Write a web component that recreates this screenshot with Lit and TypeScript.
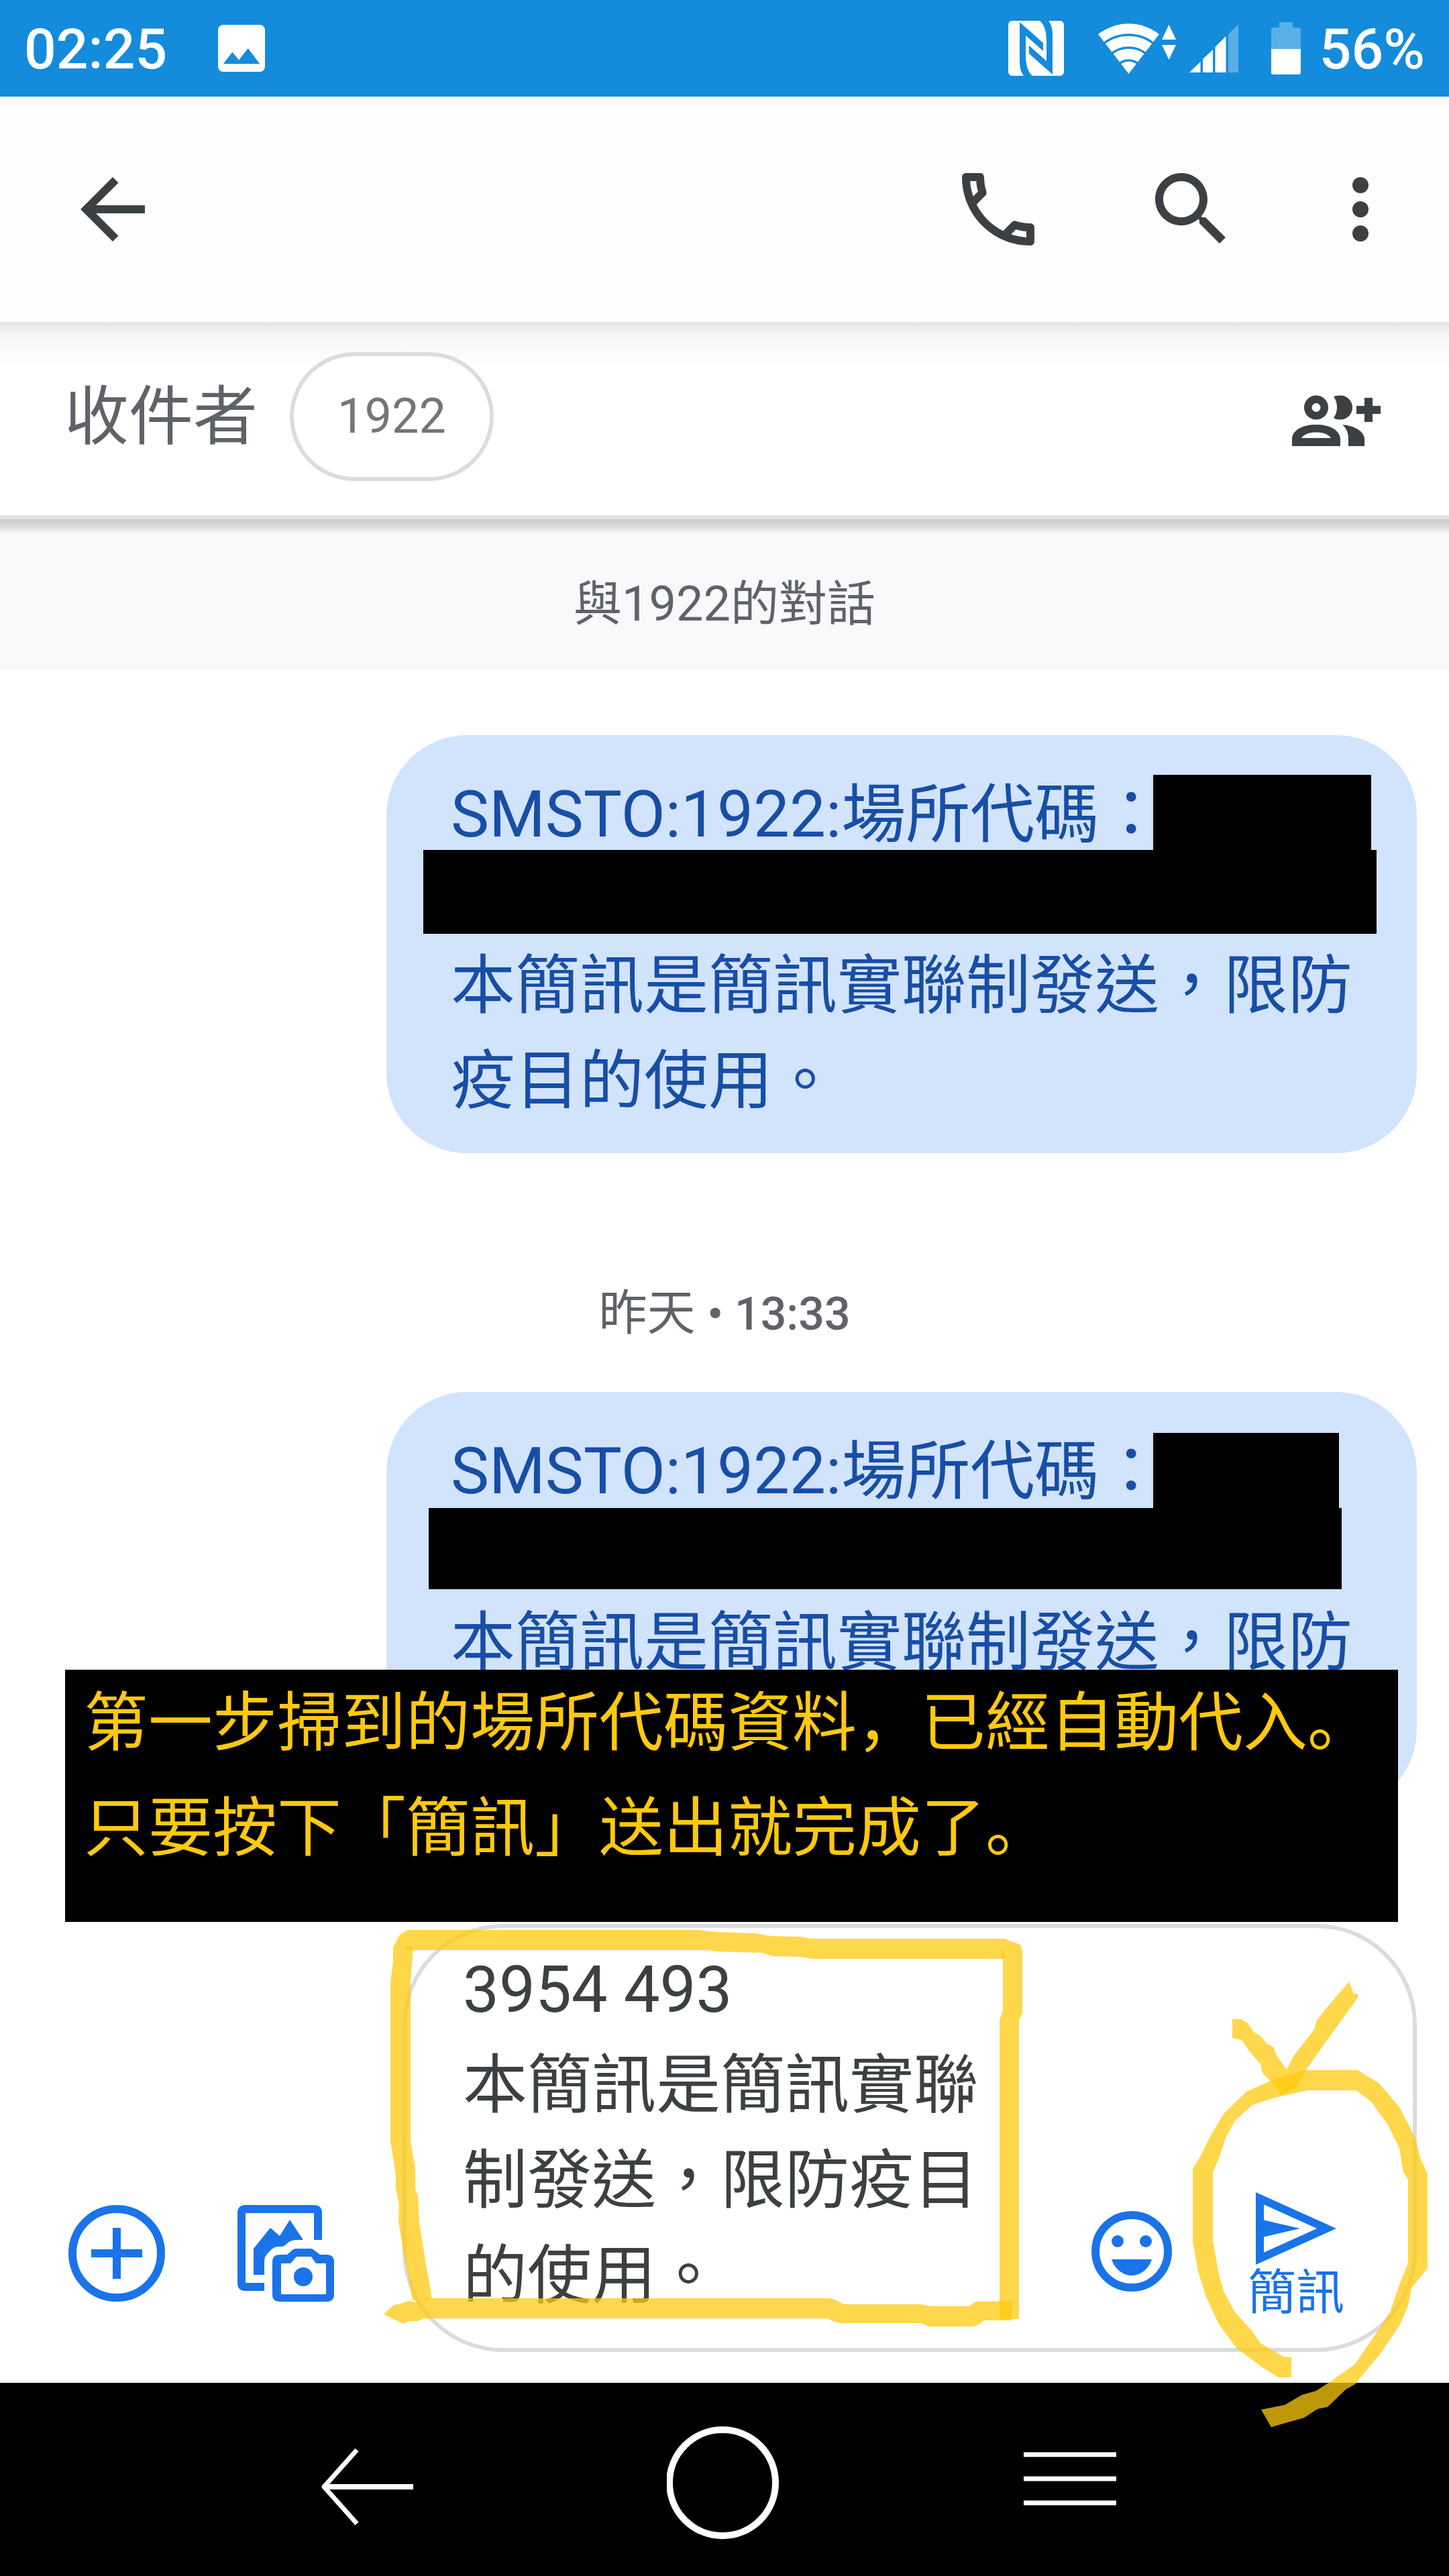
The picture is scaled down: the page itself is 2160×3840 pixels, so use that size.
import { LitElement, html, css, svg } from "lit";
import { customElement, property } from "lit/decorators.js";

const reset = css`
  *,
  *::before,
  *::after {
    box-sizing: border-box;
  }
  button {
    display: block;
    margin: 0;
    padding: 0;
    border: 0;
    background: none;
    color: inherit;
    font: inherit;
    cursor: pointer;
  }
  svg {
    display: block;
    flex: none;
  }
  .icon {
    width: 144px;
    height: 144px;
    fill: currentColor;
  }
`;

@customElement("status-bar")
export class StatusBar extends LitElement {
  static styles = [
    reset,
    css`
      :host {
        display: flex;
        align-items: center;
        height: 144px;
        padding: 0 36px;
        background: #148cdb;
        color: #fff;
        font-size: 84px;
        font-weight: 500;
        line-height: 144px;
      }
      .text {
        padding-top: 4px;
      }
      .time {
        margin-right: 76px;
      }
      .tray {
        display: flex;
        align-items: center;
        margin-left: auto;
      }
      .nfc {
        margin-right: 51px;
      }
      .wifi {
        margin-right: 20px;
      }
      .signal {
        margin-right: 49px;
      }
      .battery {
        margin-right: 28px;
      }
    `,
  ];

  render() {
    return html`
      <span class="text time">02:25</span>
      <svg width="70" height="70" viewBox="3 3 18 18" fill="#fff">
        <path d="M21 19V5c0-1.1-.9-2-2-2H5c-1.100 0-2 .9-2 2v14c0 1.100.9 2 2 2h14c1.100 0 2-.9 2-2zM8.500 13.500l2.500 3.010L14.500 12l4.500 6H5l3.500-4.500z" />
      </svg>
      <div class="tray">
        <svg class="nfc" width="83" height="82" viewBox="0 0 83 82">
          <rect width="83" height="82" rx="6" fill="#fff" />
          <g fill="#148cdb">
            <path d="M17 2 52 33V45L26 22V50C26 66 29 76 36 82H23C19 77 17 70 17 60Z" />
            <path transform="rotate(180 41.500 41)" d="M17 2 52 33V45L26 22V50C26 66 29 76 36 82H23C19 77 17 70 17 60Z" />
          </g>
        </svg>
        <svg class="wifi" width="116" height="76" viewBox="0 0 116 76">
          <path fill="#fff" d="M45.500 76 0 17A74 74 0 0 1 91 17Z" />
          <g fill="none" stroke="#148cdb" stroke-width="3.500">
            <circle cx="45.500" cy="78" r="60" />
            <circle cx="45.500" cy="78" r="41" />
            <circle cx="45.500" cy="78" r="22" />
          </g>
          <path fill="#fff" d="M95 25 105.500 3 116 25ZM95 33 105.500 55 116 33Z" />
        </svg>
        <svg class="signal" width="73" height="72" viewBox="0 0 73 72" fill="#fff">
          <path d="M0 72 16.500 56V72ZM20 72V52L35 38V72ZM38.500 72V34L54.500 18V72Z" />
          <path opacity=".3" d="M58 72V15L73 0V72Z" />
        </svg>
        <svg class="battery" width="44" height="78" viewBox="0 0 44 78" fill="#fff">
          <path opacity=".3" d="M0 40V12Q0 8 4 8H12V0H32V8H40Q44 8 44 12V40Z" />
          <path d="M0 40H44V75Q44 78 41 78H3Q0 78 0 75Z" />
        </svg>
        <span class="text">56%</span>
      </div>
    `;
  }
}

@customElement("top-bar")
export class TopBar extends LitElement {
  static styles = [
    reset,
    css`
      :host {
        display: flex;
        align-items: center;
        height: 336px;
        padding: 0 60px 0 96px;
        background: #fdfdfd;
        color: #3c4043;
      }
      .actions {
        display: flex;
        margin-left: auto;
      }
      .search {
        margin: 0 108px 0 144px;
      }
    `,
  ];

  render() {
    return html`
      <button aria-label="返回">
        <svg class="icon" viewBox="0 0 24 24">
          <path d="M20 11H7.830l5.590-5.590L12 4l-8 8 8 8 1.410-1.410L7.830 13H20v-2z" />
        </svg>
      </button>
      <div class="actions">
        <button aria-label="通話">
          <svg class="icon" viewBox="0 0 24 24">
            <path d="M6.540 5c.06.890.21 1.760.45 2.590l-1.200 1.200c-.41-1.200-.67-2.470-.76-3.790h1.510m9.860 12.020c.85.240 1.720.390 2.600.450v1.490c-1.320-.09-2.590-.35-3.800-.75l1.200-1.190M7.500 3H4c-.55 0-1 .45-1 1 0 9.390 7.610 17 17 17 .55 0 1-.45 1-1v-3.490c0-.55-.45-1-1-1-1.240 0-2.450-.2-3.570-.57-.1-.04-.21-.05-.31-.05-.26 0-.51.100-.71.290l-2.200 2.200c-2.830-1.450-5.150-3.760-6.590-6.590l2.200-2.200c.28-.28.360-.67.250-1.020C8.700 6.450 8.500 5.250 8.500 4c0-.55-.45-1-1-1z" />
          </svg>
        </button>
        <button class="search" aria-label="搜尋">
          <svg class="icon" viewBox="0 0 24 24">
            <path d="M15.500 14h-.79l-.28-.27C15.410 12.590 16 11.110 16 9.500 16 5.910 13.090 3 9.500 3S3 5.910 3 9.500 5.910 16 9.500 16c1.610 0 3.090-.59 4.230-1.570l.27.280v.79l5 4.990L20.490 19l-4.990-5zm-6 0C7.010 14 5 11.990 5 9.500S7.010 5 9.500 5 14 7.010 14 9.500 11.990 14 9.500 14z" />
          </svg>
        </button>
        <button aria-label="更多選項">
          <svg class="icon" viewBox="0 0 24 24">
            <circle cx="12" cy="6" r="2" /><circle cx="12" cy="12" r="2" /><circle cx="12" cy="18" r="2" />
          </svg>
        </button>
      </div>
    `;
  }
}

@customElement("recipient-bar")
export class RecipientBar extends LitElement {
  static styles = [
    reset,
    css`
      :host {
        display: flex;
        align-items: center;
        height: 294px;
        padding: 0 96px 6px;
        border-bottom: 6px solid #e3e3e3;
        background: linear-gradient(#e3e3e3, #f2f2f2 14px, #f8f8f8 30px, #fcfcfc 54px, #fff 66px);
        color: #5f6368;
      }
      .label {
        font-size: 96px;
        line-height: 142px;
      }
      .chip {
        width: 304px;
        height: 192px;
        margin-left: 48px;
        border: 6px solid #dadce0;
        border-radius: 96px;
        background: #fff;
        color: #757575;
        font-size: 72px;
        line-height: 180px;
        text-align: center;
      }
      .add {
        margin: 16px 0 0 auto;
        color: #3c4043;
      }
    `,
  ];

  render() {
    return html`
      <span class="label">收件者</span>
      <button class="chip">1922</button>
      <button class="add" aria-label="新增收件者">
        <svg class="icon" viewBox="0 0 144 144">
          <path
            fill-rule="evenodd"
            d="M42 32.500a18 18 0 1 0 0 36 18 18 0 1 0 0-36Zm0 11.500a6.500 6.500 0 1 1 0 13 6.500 6.500 0 1 1 0-13Z"
          />
          <path d="M68 34Q72 32.500 78 32.500A18 18 0 0 1 78 68.500Q71 68.500 68 66 73 59 73 50 73 41 68 34Z" />
          <path
            fill-rule="evenodd"
            d="M6 108V98C6 84 22 76 42 76S78 84 78 98V108ZM20 96H64C60 90 52 87.500 42 87.500S24 90 20 96Z"
          />
          <path d="M81 76C100 78 114 86 114 98V108H90V98C90 88 87 81 81 76Z" />
          <path d="M114 36h12v12h12v12h-12v12h-12V60h-12V48h12Z" />
        </svg>
      </button>
    `;
  }
}

@customElement("message-bubble")
export class MessageBubble extends LitElement {
  @property({ type: Boolean, reflect: true }) narrow = false;
  @property() text = "";

  static styles = [
    reset,
    css`
      :host {
        display: block;
        position: relative;
        width: 1536px;
        max-width: 100%;
        margin-left: auto;
        padding: 47px 92px 37px 96px;
        border-radius: 120px;
        background: #d2e3fc;
        color: #174ea6;
        font-size: 96px;
        line-height: 142px;
      }
      p {
        margin: 0;
      }
      .body {
        min-height: 284px;
        padding-top: 113px;
        box-sizing: content-box;
      }
      .mask {
        position: absolute;
        background: #000;
      }
      .code {
        top: 59px;
        left: 1143px;
        width: 325px;
        height: 113px;
      }
      .block {
        top: 171px;
        left: 55px;
        width: 1421px;
        height: 125px;
      }
      :host([narrow]) .code {
        top: 61px;
        width: 277px;
      }
      :host([narrow]) .block {
        top: 173px;
        left: 63px;
        width: 1361px;
        height: 121px;
      }
    `,
  ];

  render() {
    return html`
      <p>SMSTO:1922:場所代碼：</p>
      <p class="body">${this.text}</p>
      <div class="mask code"></div>
      <div class="mask block"></div>
    `;
  }
}

const marker = svg`
  <path d="M586 2903 596 2884 608 2877H1040L1068 2880 1125 2882 1149 2886 1194 2887 1209 2890H1497L1521 2899 1524 2909V3001L1519 3011V3457H1490V3011L1495 2997V2920H1209L1194 2917 1152 2916 1135 2911 1068 2909 1057 2907H615V2915L612 2954V3191L619 3233V3264L623 3274 625 3313 635 3376 643 3419V3426L623 3432 615 3428 601 3354 594 3310 595 3286 590 3262V3242L582 3191V2954L586 2925Z" />
  <path d="M572 3450 586 3437 610 3430 620 3432 637 3426H1237L1247 3429 1258 3435H1373L1388 3438 1444 3438 1455 3431 1508 3430V3459H1466L1459 3465 1452 3468H1384L1373 3463H1252L1242 3460 1233 3456H632L623 3460H610L601 3464Z" />
  <path d="M605 2902H615V2907H605ZM1493 2908H1497V2920H1493Z" />
  <path d="M1837 3010H1850L1860 3016 1869 3029 1879 3035 1889 3047 1898 3051 1903 3064 1918 3085 1929 3064 1960 3024 1962 3013 1975 2996 2011 2954 2018 2972H2024V2978L1969 3054 1946 3087 1934 3110 1910 3124 1900 3108 1882 3090 1879 3077 1862 3057 1851 3041 1837 3038Z" />
  <path d="M1925 3514 1913 3513 1879 3493 1865 3473 1841 3447 1824 3416 1817 3391 1808 3340V3238L1817 3217 1827 3187 1841 3161 1867 3138 1900 3127 1949 3116H2022L2044 3133 2068 3166 2086 3202 2092 3238 2099 3249V3373L2086 3406 2072 3447 2048 3483 2020 3524 1982 3551 1962 3564 1941 3570 1915 3585 1880 3592 1895 3618 1944 3604 1964 3591 1979 3588 2006 3562 2020 3554 2058 3508 2086 3467 2099 3437 2104 3411 2128 3381V3240L2117 3217 2110 3187 2086 3141 2055 3105 2024 3086H1944L1900 3099 1858 3118 1824 3151 1803 3187 1789 3215 1778 3233V3342L1786 3386 1798 3424 1817 3465 1844 3501 1882 3529 1906 3544H1925Z" />
`;

@customElement("message-composer")
export class MessageComposer extends LitElement {
  static styles = [
    reset,
    css`
      :host {
        display: flex;
        position: relative;
        z-index: 1;
        align-items: flex-end;
        padding: 24px 48px 46px 102px;
        background: #fff;
        color: #1a73e8;
      }
      .tool {
        margin: 0 108px 75px 0;
      }
      .gallery {
        margin-right: 102px;
      }
      .field {
        display: flex;
        flex: 1;
        align-items: flex-end;
        min-width: 0;
        border: 6px solid #dadce0;
        border-radius: 150px;
        padding: 0 102px 24px 84px;
      }
      textarea {
        display: block;
        width: 788px;
        height: 602px;
        margin: 0;
        padding: 21px 0 0;
        border: 0;
        outline: 0;
        resize: none;
        overflow: hidden;
        background: none;
        color: #3c4043;
        font-family: inherit;
        font-size: 96px;
        line-height: 142px;
      }
      .emoji {
        margin: 0 0 48px auto;
      }
      .send {
        margin: 0 0 16px 101px;
        font-size: 72px;
        line-height: 84px;
        text-align: center;
      }
      .send .icon {
        margin-bottom: -18px;
      }
      .marks {
        position: absolute;
        top: 0;
        left: 0;
        width: 100%;
        height: auto;
        fill: #ffc90e;
        fill-opacity: 0.75;
        pointer-events: none;
      }
    `,
  ];

  render() {
    return html`
      <button class="tool" aria-label="新增">
        <svg class="icon" viewBox="0 0 144 144">
          <g fill="none" stroke="currentColor" stroke-width="12">
            <circle cx="72" cy="72" r="66" />
            <path d="M72 34V110M34 72H110" />
          </g>
        </svg>
      </button>
      <button class="tool gallery" aria-label="相片">
        <svg class="icon" viewBox="0 0 144 144">
          <path d="M12 0H114Q126 0 126 12V52H114V12H12V116H40V128H12Q0 128 0 116V12Q0 0 12 0Z" />
          <path d="M24 104V65L49 34 63 46 78 22 98 52H86Q78 53 74 57 71 61 66 62H60Q54 62 47 70 40 76 40 84V104Z" />
          <path
            fill-rule="evenodd"
            d="M63 74H74L82 67Q84 65 87 65H109Q112 65 114 67L123 74H133Q144 74 144 85V133Q144 144 133 144H63Q52 144 52 133V85Q52 74 63 74ZM65 87V133H132V87H117L110 77H88L79 87Z"
          />
          <circle cx="98" cy="107" r="14" />
        </svg>
      </button>
      <div class="field">
        <textarea aria-label="簡訊內容" rows="4" .value=${"3954 493\n本簡訊是簡訊實聯制發送，限防疫目的使用。"}></textarea>
        <button class="emoji" aria-label="表情符號">
          <svg class="icon" viewBox="0 0 24 24">
            <circle cx="12" cy="12" r="9" fill="none" stroke="currentColor" stroke-width="2" />
            <circle cx="8.500" cy="9.500" r="1.500" />
            <circle cx="15.500" cy="9.500" r="1.500" />
            <path d="M12 18c2.280 0 4.220-1.660 5-4H7c.78 2.340 2.720 4 5 4z" />
          </svg>
        </button>
        <button class="send">
          <svg class="icon" viewBox="0 0 24 24">
            <path fill-rule="evenodd" d="M2 3V21L22 12ZM4 6.050 17.200 12 4 17.950V14.100L13 12 4 9.900Z" />
          </svg>
          簡訊
        </button>
      </div>
      <svg class="marks" viewBox="0 2844 2160 786" aria-hidden="true">${marker}</svg>
    `;
  }
}

@customElement("nav-bar")
export class NavBar extends LitElement {
  static styles = [
    reset,
    css`
      :host {
        display: flex;
        align-items: center;
        justify-content: space-between;
        height: 288px;
        padding: 0 496px 0 478px;
        background: #000;
      }
      svg {
        fill: none;
        stroke: #fff;
      }
    `,
  ];

  render() {
    return html`
      <button aria-label="返回">
        <svg width="152" height="178" viewBox="0 0 152 178" stroke-width="7" stroke-linejoin="round">
          <path d="M54 45 5 100 54 155" /><path d="M5 100H138" stroke-width="8" />
        </svg>
      </button>
      <button aria-label="主畫面">
        <svg width="168" height="178" viewBox="0 0 168 178" stroke-width="10"><circle cx="83" cy="94" r="79" /></svg>
      </button>
      <button aria-label="最近使用">
        <svg width="138" height="178" viewBox="0 0 138 178" stroke-width="7"><path d="M0 52H138M0 88H138M0 124H138" /></svg>
      </button>
    `;
  }
}

@customElement("app-root")
export class AppRoot extends LitElement {
  static styles = [
    reset,
    css`
      :host {
        display: flex;
        flex-direction: column;
        min-height: 100vh;
        background: #fff;
        color: #5f6368;
        font-family: Roboto, "Noto Sans CJK TC", sans-serif;
      }
      .title {
        margin: 0;
        padding: 78px 0 48px;
        background: linear-gradient(#cdcdcd, #dcdcdc 11px, #f0f0f0 19px, #f8f9fb 24px);
        font-size: 72px;
        font-weight: 400;
        line-height: 98px;
        text-align: center;
      }
      .thread {
        position: relative;
        flex: 1;
        padding: 98px 48px 0;
      }
      .stamp {
        margin: 0;
        padding: 190px 0 67px;
        font-size: 72px;
        line-height: 98px;
        text-align: center;
      }
      .clock {
        font-size: 68px;
        font-weight: 500;
      }
      .note {
        position: absolute;
        top: 1491px;
        right: 76px;
        left: 97px;
        height: 376px;
        margin: 0;
        padding: 0 0 0 28px;
        background: #000;
        color: #ffc90e;
        font-family: "Noto Sans CJK SC", sans-serif;
        font-size: 96px;
        line-height: 157px;
        z-index: 2;
      }
      .note span {
        display: block;
        margin-top: -8px;
      }
    `,
  ];

  render() {
    return html`
      <status-bar></status-bar>
      <top-bar></top-bar>
      <recipient-bar></recipient-bar>
      <h1 class="title">與1922的對話</h1>
      <main class="thread">
        <message-bubble text="本簡訊是簡訊實聯制發送，限防疫目的使用。"></message-bubble>
        <p class="stamp">昨天 <span class="clock">• 13:33</span></p>
        <message-bubble narrow text="本簡訊是簡訊實聯制發送，限防"></message-bubble>
        <p class="note"><span>第一步掃到的場所代碼資料，已經自動代入。<br />只要按下「簡訊」送出就完成了。</span></p>
      </main>
      <message-composer></message-composer>
      <nav-bar></nav-bar>
    `;
  }
}
